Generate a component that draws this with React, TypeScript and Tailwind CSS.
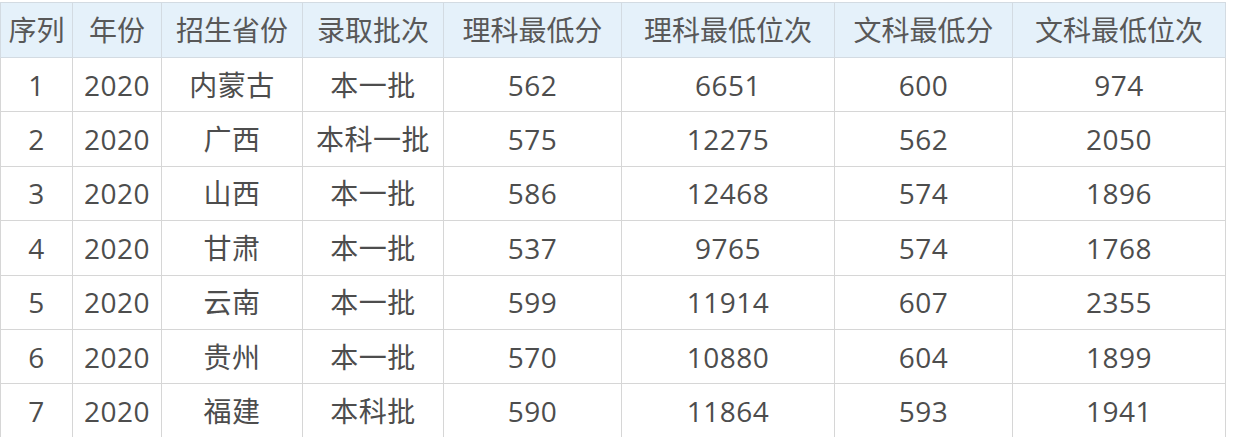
import React from "react";

const HEADERS = ["序列", "年份", "招生省份", "录取批次", "理科最低分", "理科最低位次", "文科最低分", "文科最低位次"];

const WIDTHS = ["w-[72px]", "w-[89px]", "w-[141px]", "w-[141px]", "w-[178px]", "w-[213px]", "w-[178px]", "w-[213px]"];

const ROWS = [
  ["1", "2020", "内蒙古", "本一批", "562", "6651", "600", "974"],
  ["2", "2020", "广西", "本科一批", "575", "12275", "562", "2050"],
  ["3", "2020", "山西", "本一批", "586", "12468", "574", "1896"],
  ["4", "2020", "甘肃", "本一批", "537", "9765", "574", "1768"],
  ["5", "2020", "云南", "本一批", "599", "11914", "607", "2355"],
  ["6", "2020", "贵州", "本一批", "570", "10880", "604", "1899"],
  ["7", "2020", "福建", "本科批", "590", "11864", "593", "1941"],
];

export default function App() {
  return (
    <div className="w-[1242px] h-[437px] overflow-hidden bg-white pt-[2px] font-['Open_Sans','Noto_Sans_CJK_SC',sans-serif]">
      <table className="table-fixed border-collapse w-[1225px]">
        <colgroup>
          {WIDTHS.map((w, i) => (
            <col key={i} className={w} />
          ))}
        </colgroup>
        <thead>
          <tr className="h-[55px] bg-[#e5f1fa]">
            {HEADERS.map(h => (
              <th key={h} className="border border-[#d3dbe2] text-[28px] font-normal text-[#585858] text-center p-0 leading-none">
                {h}
              </th>
            ))}
          </tr>
        </thead>
        <tbody>
          {ROWS.map((row, r) => (
            <tr key={r} className="h-[54.4px]">
              {row.map((cell, c) => (
                <td
                  key={c}
                  className="border border-[#d6d6d6] text-[28px] text-center p-0 leading-none tracking-[0.5px] text-[#4d4d4d]"
                >
                  {cell}
                </td>
              ))}
            </tr>
          ))}
        </tbody>
      </table>
    </div>
  );
}
